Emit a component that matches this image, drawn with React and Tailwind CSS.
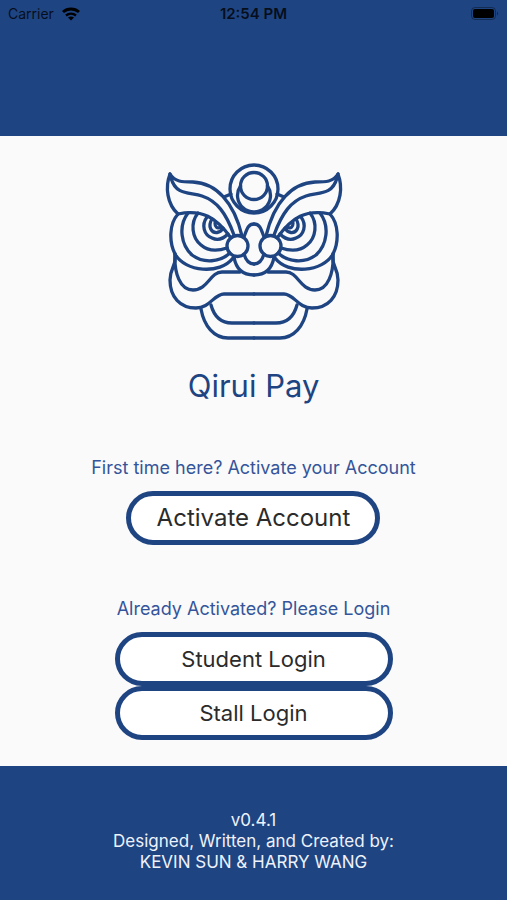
import clsx from 'clsx';

function MaskHalf() {
  return (
    <>
      {/* ear and brow */}
      <path d="M10 18C5 31 7 48 18 58" />
      <path d="M10 18C15 26 22 26 33 26C56 27 74 46 82 80" />
      <path d="M11 22C16 40 30 36 42 40C57 45 66 57 74 79" />
      <path d="M18 58C42 53 56 61 71 82" />
      <path d="M64 41L71 38" />
      {/* eye rings */}
      <path d="M18 58C9 68 9 86 15 98C25 116 60 119 73 102" />
      <path d="M28 57C18 70 21 89 32 99C44 108 60 106 70 97" />
      <path d="M38 57C30 67 32 82 41 89C49 96 58 95 67 92" />
      <path d="M47 61C41 69 44 79 52 82C58 85 64 82 68 78" />
      <path d="M52 63C47 71 52 77 57 76.500C60 76 62 74 63 72" />
      <path d="M55 67C55 71 57 73 61 71" />
      {/* cheek */}
      <path d="M15 98C14 117 20 134 33 134C48 134 50 116 62 116H80" />
      <path d="M15 98C17 110 10 111 10 124C10 141 20 152 36 152C50 152 54 138 64 138H94" />
      {/* jaw */}
      <path d="M51 149C54 160 61 167 72 167H94" />
      <path d="M41 153C44 170 54 182 68 182H94" />
      {/* nose */}
      <path d="M84 81C87 73 88 68 94 68" />
      <path d="M84 98C86 105 89 108 94 108" />
      <path d="M74 101C76 113 83 119 94 119" />
      <circle cx="77.500" cy="90" r="10.500" />
    </>
  );
}

function LionMask() {
  return (
    <svg
      viewBox="0 0 188 190"
      className="w-[188px] h-[190px]"
      fill="none"
      stroke="#1e4482"
      strokeWidth="3.300"
      strokeLinecap="round"
      strokeLinejoin="round"
      aria-hidden="true"
    >
      <MaskHalf />
      <g transform="translate(188 0) scale(-1 1)">
        <MaskHalf />
      </g>
      <circle cx="94" cy="33" r="24" />
      <circle cx="94" cy="30" r="13.500" />
      <path d="M80.500 30A16.500 16.500 0 1 0 107.500 30" />
    </svg>
  );
}

function StatusBar() {
  return (
    <div className="grid grid-cols-3 items-center h-7 px-2 text-sm leading-4 text-black/80">
      <div className="flex items-center gap-2">
        <span>Carrier</span>
        <svg viewBox="0 0 18 14" className="w-[18px] h-[14px]" fill="none" stroke="#000" strokeWidth="3" aria-hidden="true">
          <path d="M1 5C5.500 1 12.500 1 17 5" />
          <path d="M4 8.500C7 6 11 6 14 8.500" strokeWidth="2.500" />
          <path d="M9 13.500L6 10.500C8 9 10 9 12 10.500Z" fill="#000" stroke="none" />
        </svg>
      </div>
      <span className="text-center text-[15px] font-semibold">12:54 PM</span>
      <svg viewBox="0 0 28 14" className="w-7 h-[14px] justify-self-end" aria-hidden="true">
        <rect x="0.500" y="0.500" width="24" height="12" rx="3.500" fill="none" stroke="#000" strokeOpacity="0.35" />
        <rect x="2" y="2" width="21" height="9" rx="2" fill="#000" />
        <path d="M26 4.500C27.500 5 27.500 8 26 8.500Z" fill="#000" fillOpacity="0.4" />
      </svg>
    </div>
  );
}

function PillButton({ className, children }) {
  return (
    <button
      type="button"
      className={clsx('h-[54px] rounded-full border-5 border-[#1e4482] bg-white text-[#2b2b2b]', className)}
    >
      {children}
    </button>
  );
}

export default function App() {
  return (
    <div className="min-h-screen flex flex-col bg-[#fafafa] font-['Inter',sans-serif]">
      <header className="h-[136px] bg-[#1e4482]">
        <StatusBar />
      </header>

      <main className="flex-1 flex flex-col items-center pt-5 pb-6 text-[#1e4482]">
        <LionMask />
        <h1 className="mt-5 text-[31px] leading-10">Qirui Pay</h1>

        <section className="mt-[50px] flex flex-col items-center gap-[11px]">
          <p className="text-lg leading-6 text-[#35559a]">First time here? Activate your Account</p>
          <PillButton className="w-[254px] text-2xl">Activate Account</PillButton>
        </section>

        <section className="mt-[52px] flex flex-col items-center">
          <p className="mb-[11px] text-lg leading-6 text-[#35559a]">Already Activated? Please Login</p>
          <PillButton className="w-[278px] text-[22px]">Student Login</PillButton>
          <PillButton className="w-[278px] text-[22px]">Stall Login</PillButton>
        </section>
      </main>

      <footer className="h-[134px] pt-11 bg-[#1e4482] text-center text-[17px] leading-[21px] text-[#eef2fa]">
        <p>v0.4.1</p>
        <p>Designed, Written, and Created by:</p>
        <p>KEVIN SUN &amp; HARRY WANG</p>
      </footer>
    </div>
  );
}
